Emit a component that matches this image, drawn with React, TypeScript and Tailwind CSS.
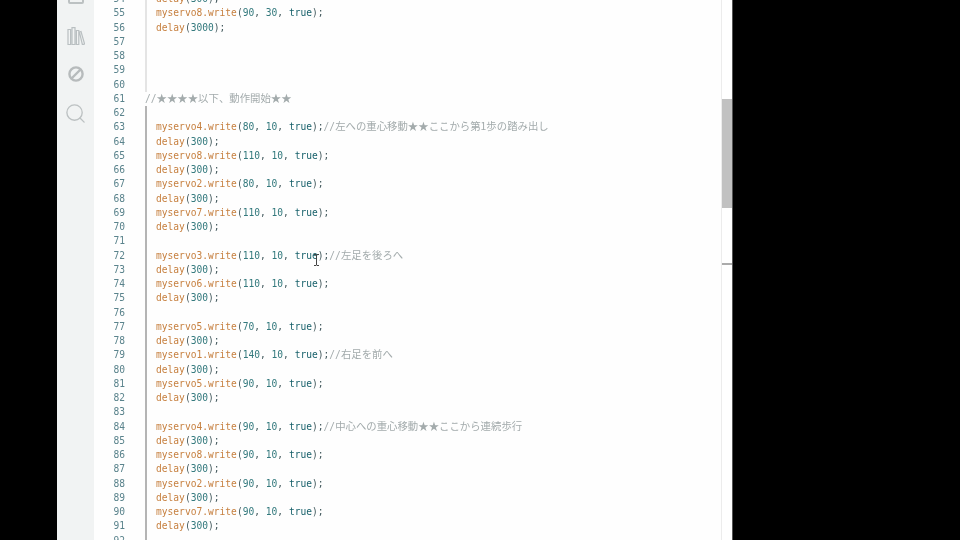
import React from 'react';
import { Search } from 'lucide-react';

const d = 'delay(300);';

// first line shown is 54, the page is scrolled part way down
const code: string[] = [
  d,
  'myservo8.write(90, 30, true);',
  'delay(3000);',
  '',
  '',
  '',
  '',
  '//★★★★以下、動作開始★★',
  '',
  'myservo4.write(80, 10, true);//左への重心移動★★ここから第1歩の踏み出し',
  d,
  'myservo8.write(110, 10, true);',
  d,
  'myservo2.write(80, 10, true);',
  d,
  'myservo7.write(110, 10, true);',
  d,
  '',
  'myservo3.write(110, 10, true);//左足を後ろへ',
  d,
  'myservo6.write(110, 10, true);',
  d,
  '',
  'myservo5.write(70, 10, true);',
  d,
  'myservo1.write(140, 10, true);//右足を前へ',
  d,
  'myservo5.write(90, 10, true);',
  d,
  '',
  'myservo4.write(90, 10, true);//中心への重心移動★★ここから連続歩行',
  d,
  'myservo8.write(90, 10, true);',
  d,
  'myservo2.write(90, 10, true);',
  d,
  'myservo7.write(90, 10, true);',
  d,
  '',
];

const Comment = ({ text }: { text: string }) => (
  <span className="text-[#a3abac]">
    //<span className="text-[10.4px] leading-[0] font-['Noto_Sans_CJK_JP']">{text}</span>
  </span>
);

const Statement = ({ text }: { text: string }) => {
  const servo = text.match(/^(myservo\d)\.write\((\d+), (\d+), true\);$/);
  if (servo) {
    return (
      <>
        <span className="text-[#c67f3e]">{servo[1]}.write</span>
        <span className="text-[#43595d]">(</span>
        <span className="text-[#33797d]">{servo[2]}</span>
        <span className="text-[#43595d]">, </span>
        <span className="text-[#33797d]">{servo[3]}</span>
        <span className="text-[#43595d]">, </span>
        <span className="text-[#155f69]">true</span>
        <span className="text-[#43595d]">);</span>
      </>
    );
  }
  const delay = text.match(/^delay\((\d+)\);$/);
  if (delay) {
    return (
      <>
        <span className="text-[#c67f3e]">delay</span>
        <span className="text-[#43595d]">(</span>
        <span className="text-[#33797d]">{delay[1]}</span>
        <span className="text-[#43595d]">);</span>
      </>
    );
  }
  return null;
};

const Line = ({ num, text }: { num: number; text: string }) => {
  const isTopLevel = text.startsWith('//');
  const [stmt, note] = text.split('//');
  return (
    <div className="flex h-[14.25px] leading-[14.25px] whitespace-pre">
      <div className="w-[31px] shrink-0 text-right text-[#5a838c]">{num}</div>
      {isTopLevel ? (
        <div className="ml-[20px]">
          <Comment text={note} />
        </div>
      ) : (
        <div
          className={`ml-[20px] pl-[9px] border-l-2 ${
            num < 61 ? 'border-[#e4e4e4]' : 'border-[#b4b4b4]'
          }`}
        >
          <Statement text={stmt} />
          {note && <Comment text={note} />}
        </div>
      )}
    </div>
  );
};

export default function App() {
  return (
    <div className="relative flex w-[960px] h-[540px] overflow-hidden bg-black">
      <div className="w-[57px] shrink-0" />

      {/* activity bar */}
      <div className="w-[37px] shrink-0 bg-[#f1f3f3] flex flex-col items-center text-[#bcc1c2] blur-[0.4px]">
        <div className="w-[16px] h-[13px] -mt-[9px] ml-[1px] border-2 border-[#bcc1c2] rounded-[2px]" />
        <svg className="mt-[23px] ml-[1px]" width="18" height="18" viewBox="0 0 18 18" fill="none" stroke="#b9bfc1" strokeWidth="1.2">
          <path d="M1 2.5h2.6v15H1zM5 .6h3v16.9H5zM9.4 3.5h2.4v14H9.4zM12.4 5l1.6-.5 3.6 12.6-2.2.6z" />
        </svg>
        <svg className="mt-[20px]" width="18" height="18" viewBox="0 0 18 18" fill="none" stroke="#b7bbbc" strokeWidth="2.4">
          <circle cx="9" cy="9" r="6.6" />
          <path d="M4.5 13.5l9-9" />
        </svg>
        <Search size={23} strokeWidth={1.4} className="mt-[19px] -ml-[1px]" />
      </div>

      {/* editor */}
      <div className="w-[627px] shrink-0 bg-[#fefefe] font-['DejaVu_Sans_Mono','Noto_Sans_CJK_JP',monospace] text-[9.6px] overflow-hidden blur-[0.4px]">
        <div className="-mt-[7.8px]">
          {code.map((text, i) => (
            <Line key={i} num={54 + i} text={text} />
          ))}
        </div>
      </div>

      {/* scrollbar */}
      <div className="w-[11px] shrink-0 bg-white border-l border-[#ececec] flex flex-col">
        <div className="h-[99px] shrink-0" />
        <div className="h-[109px] shrink-0 bg-[#c1c1c1]" />
        <div className="h-[55px] shrink-0" />
        <div className="h-[2px] shrink-0 bg-[#ababab]" />
      </div>
      <div className="flex-1 border-l border-[#555]" />

      {/* mouse cursor */}
      <svg className="absolute left-[313px] top-[254px]" width="7" height="12" viewBox="0 0 7 12" fill="none" stroke="#444" strokeWidth="1">
        <path d="M1 .5h2l.5.5.5-.5h2M3.5 1v10M1 11.5h2l.5-.5.5.5h2" />
      </svg>
    </div>
  );
}
